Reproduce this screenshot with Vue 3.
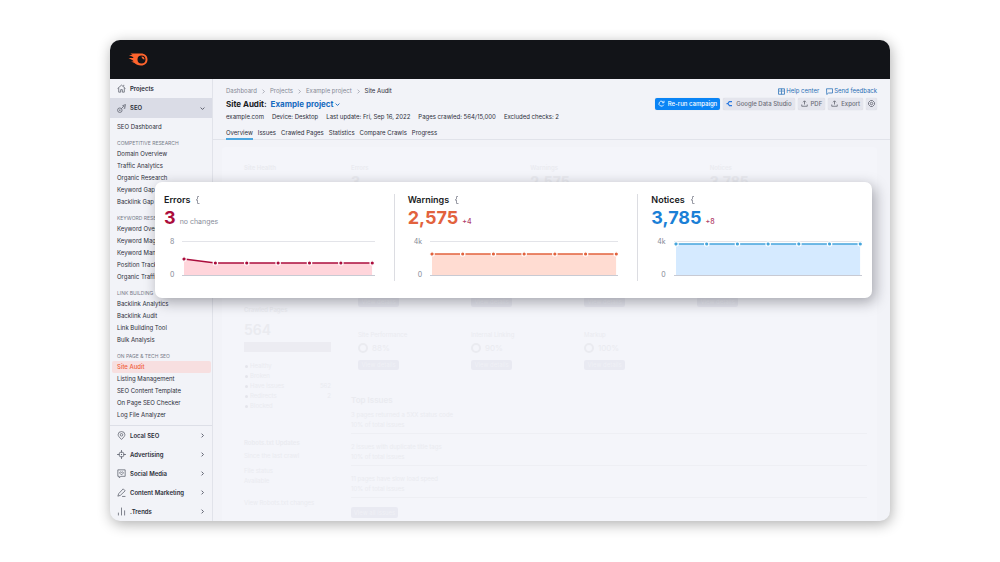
<script setup>
const groups = [
  {
    title: 'Competitive research',
    items: ['Domain Overview', 'Traffic Analytics', 'Organic Research', 'Keyword Gap', 'Backlink Gap']
  },
  {
    title: 'Keyword research',
    items: ['Keyword Overview', 'Keyword Magic Tool', 'Keyword Manager', 'Position Tracking', 'Organic Traffic Insights']
  },
  {
    title: 'Link building',
    items: ['Backlink Analytics', 'Backlink Audit', 'Link Building Tool', 'Bulk Analysis']
  },
  {
    title: 'On page & tech SEO',
    items: ['Site Audit', 'Listing Management', 'SEO Content Template', 'On Page SEO Checker', 'Log File Analyzer']
  }
]

const sections = [
  { name: 'Local SEO', icon: 'M8 15C4 11 2 9 2 6.500A6 5.500 0 0 1 14 6.500C14 9 12 11 8 15ZM8 4.500A2.200 2.200 0 1 0 8 9A2.200 2.200 0 1 0 8 4.500Z' },
  { name: 'Advertising', icon: 'M8 3.500A4.500 4.500 0 1 0 8 12.500A4.500 4.500 0 1 0 8 3.500ZM8 0V5M8 11V16M0 8H5M11 8H16M8 7V9M7 8H9' },
  { name: 'Social Media', icon: 'M1.500 1.500H14.500V13H7L4 15.500V13H1.500ZM8 10.500L5 7.500C4 5.500 7 4 8 6C9 4 12 5.500 11 7.500Z' },
  { name: 'Content Marketing', icon: 'M1.500 14.500L3 10L11 1.500L14.500 5L6 13ZM9 15H15' },
  { name: '.Trends', icon: 'M2.500 10V15M8 1V15M13.500 6V15' }
]

const tabs = ['Overview', 'Issues', 'Crawled Pages', 'Statistics', 'Compare Crawls', 'Progress']
const meta = ['example.com', 'Device: Desktop', 'Last update: Fri, Sep 16, 2022', 'Pages crawled: 564/15,000', 'Excluded checks: 2']

const stats = [
  { name: 'Errors', value: '3', change: 'no changes', max: '8', color: '#ab0d3c', fill: '#ffd5db', points: [17, 21, 21, 21, 21, 21, 21] },
  { name: 'Warnings', value: '2,575', change: '+4', max: '4k', color: '#e2623d', fill: '#ffdcd2', points: [12, 12, 12, 12, 12, 12, 12] },
  { name: 'Notices', value: '3,785', change: '+8', max: '4k', color: '#1b7fd6', line: '#45a5dc', fill: '#d5eaff', points: [2, 2, 2, 2, 2, 2, 2] }
]

const reports = [
  { name: 'Crawlability', score: '91%' },
  { name: 'HTTPS', score: '98%' },
  { name: 'International SEO', score: '100%' },
  { name: 'Core Web Vitals', score: '60%' },
  { name: 'Site Performance', score: '88%' },
  { name: 'Internal Linking', score: '90%' },
  { name: 'Markup', score: '100%' }
]

const legend = [['Healthy', ''], ['Broken', ''], ['Have issues', '562'], ['Redirects', '2'], ['Blocked', '']]

const issues = [
  '3 pages returned a 5XX status code',
  '2 issues with duplicate title tags',
  '11 pages have slow load speed'
]

const x = i => (i * 100) / 6

function area(points) {
  return '0,33 ' + points.map((p, i) => x(i) + ',' + p).join(' ') + ' 100,33'
}
</script>

<template>
  <div class="page">
    <div class="window">
      <header class="topbar">
        <svg class="logo" viewBox="0 0 40 26">
          <path fill="#ff642d" d="M5 1H26C34 1 39 6 39 13C39 20 34 25 26 25C20 25 16 23 13 20L6 17H11L10 15L1 10H11L10 8L2 4H9Z" />
          <circle cx="27" cy="13" r="8" fill="#121418" />
          <path fill="#ff642d" d="M27 7A6 6 0 0 1 33 13C30 13 27 10 27 7Z" />
        </svg>
      </header>

      <div class="body">
        <nav class="sidebar">
          <a href="#" class="section">
            <svg class="icon" viewBox="0 0 16 16"><path d="M1 8L8 2L15 8M3 7V14.500H6.500V10H9.500V14.500H13V7M12 4V1.500" /></svg>
            <span>Projects</span>
          </a>
          <button type="button" class="section open">
            <svg class="icon" viewBox="0 0 16 16"><path d="M5 7A4 4 0 1 0 5 15A4 4 0 1 0 5 7ZM5 10V12M4 11H6M8 8L11 5M10 3L15 1L14 6ZM12 8L15 7" /></svg>
            <span>SEO</span>
            <svg class="arrow" viewBox="0 0 8 8"><path d="M1 2.500L4 5.500L7 2.500" /></svg>
          </button>

          <div class="links">
            <a href="#" class="link">SEO Dashboard</a>
            <div v-for="group in groups" :key="group.title" class="group">
              <h4>{{ group.title }}</h4>
              <a
                v-for="item in group.items"
                :key="item"
                href="#"
                class="link"
                :class="{ active: item === 'Site Audit' }"
              >{{ item }}</a>
            </div>
          </div>

          <div class="more">
            <button v-for="s in sections" :key="s.name" type="button" class="section">
              <svg class="icon" viewBox="0 0 16 16"><path :d="s.icon" /></svg>
              <span>{{ s.name }}</span>
              <svg class="arrow" viewBox="0 0 8 8"><path d="M2.500 1L5.500 4L2.500 7" /></svg>
            </button>
          </div>
        </nav>

        <main class="main">
          <div class="head">
            <div class="row crumbs-row">
              <div class="crumbs">
                <template v-for="c in ['Dashboard', 'Projects', 'Example project']" :key="c">
                  <a href="#">{{ c }}</a>
                  <svg viewBox="0 0 8 8"><path d="M2.500 1L5.500 4L2.500 7" /></svg>
                </template>
                <span>Site Audit</span>
              </div>
              <div class="help">
                <a href="#">
                  <svg viewBox="0 0 14 14"><path d="M1 1.500H13V12.500H1ZM7 1.500V12.500M9 4.500H11M9 7H11M3 4.500H5M3 7H5" /></svg>
                  Help center
                </a>
                <a href="#">
                  <svg viewBox="0 0 14 14"><path d="M1 1.500H13V10H5L1.500 13Z" /></svg>
                  Send feedback
                </a>
              </div>
            </div>

            <div class="row title-row">
              <h1>
                Site Audit:
                <a href="#">Example project <svg viewBox="0 0 8 8"><path d="M1 2.500L4 5.500L7 2.500" /></svg></a>
              </h1>
              <div class="actions">
                <button type="button" class="btn primary">
                  <svg viewBox="0 0 14 14"><path d="M11.500 9.500A5 5 0 1 1 9.500 3M8 5.500H12V1.500" /></svg>
                  Re-run campaign
                </button>
                <button type="button" class="btn">
                  <svg class="studio" viewBox="0 0 14 14"><path d="M6 3H12M6 11H12M1 7H5M6.500 3L4 7L6.500 11" /></svg>
                  Google Data Studio
                </button>
                <button v-for="b in ['PDF', 'Export']" :key="b" type="button" class="btn">
                  <svg viewBox="0 0 14 14"><path d="M7 9V2M4 4.500L7 1.500L10 4.500M1.500 9V12.500H12.500V9" /></svg>
                  {{ b }}
                </button>
                <button type="button" class="btn gear" aria-label="Settings">
                  <svg viewBox="0 0 14 14"><path d="M5 1H9L13 5V9L9 13H5L1 9V5ZM7 4.500A2.500 2.500 0 1 0 7 9.500A2.500 2.500 0 1 0 7 4.500Z" /></svg>
                </button>
              </div>
            </div>

            <div class="meta">
              <span v-for="m in meta" :key="m">{{ m }}</span>
            </div>

            <div class="tabs">
              <a v-for="(t, i) in tabs" :key="t" href="#" :class="{ current: i === 0 }">{{ t }}</a>
            </div>
          </div>

          <div class="panel">
            <div class="left">
              <div class="health"><b>Site Health</b></div>
              <b class="crawled">Crawled Pages</b>
              <div class="total">564</div>
              <div class="bar"></div>
              <ul class="legend">
                <li v-for="l in legend" :key="l[0]"><i></i>{{ l[0] }}<span>{{ l[1] }}</span></li>
              </ul>
              <div class="robots">
                <b>Robots.txt Updates</b>
                <p>Since the last crawl</p>
                <p class="spaced">File status</p>
                <p>Available</p>
                <p class="spaced far">View Robots.txt changes</p>
              </div>
            </div>
            <div class="right">
              <div class="summary">
                <div v-for="s in stats" :key="s.name">
                  <b>{{ s.name }}</b>
                  <strong>{{ s.value }}</strong>
                </div>
              </div>
              <div class="reports">
                <div v-for="r in reports" :key="r.name">
                  <span>{{ r.name }}</span>
                  <div class="score"><i></i>{{ r.score }}</div>
                  <button type="button" class="ghost">View details</button>
                </div>
              </div>
              <h2>Top Issues</h2>
              <div v-for="issue in issues" :key="issue" class="issue">
                <div>{{ issue }}</div>
                <div>10% of total issues</div>
              </div>
              <button type="button" class="ghost wide">View all issues</button>
            </div>
          </div>
        </main>
      </div>

      <section class="popup">
        <template v-for="(s, n) in stats" :key="s.name">
          <div v-if="n" class="divider"></div>
          <div class="stat">
            <h3>
              {{ s.name }}
              <svg viewBox="0 0 5 8"><path d="M4 0.500H2.500V3L1 4H2.500V7.500H4.500" /></svg>
            </h3>
            <div class="figure">
              <strong :style="{ color: s.color }">{{ s.value }}</strong>
              <span :class="{ up: n }">{{ s.change }}</span>
            </div>
            <div class="chart">
              <div class="axis"><span>{{ s.max }}</span><span>0</span></div>
              <div class="plot">
                <svg class="drawing">
                  <svg width="100%" height="33" viewBox="0 0 100 33" preserveAspectRatio="none">
                    <polygon :points="area(s.points)" :fill="s.fill" />
                  </svg>
                  <line
                    v-for="i in 6"
                    :key="'l' + i"
                    :x1="x(i - 1) + '%'"
                    :y1="s.points[i - 1]"
                    :x2="x(i) + '%'"
                    :y2="s.points[i]"
                    :stroke="s.line || s.color"
                    stroke-width="1.500"
                  />
                  <circle
                    v-for="(p, i) in s.points"
                    :key="'c' + i"
                    :cx="x(i) + '%'"
                    :cy="p"
                    r="2.200"
                    :fill="s.line || s.color"
                    stroke="#fff"
                    stroke-width="1.200"
                  />
                </svg>
              </div>
            </div>
          </div>
        </template>
      </section>
    </div>
  </div>
</template>

<style>
body {
  margin: 0;
  background: #fff;
}
</style>

<style scoped>
* {
  box-sizing: border-box;
}

.page {
  padding: 40px 11%;
  font-family: Inter, 'Liberation Sans', sans-serif;
  font-size: 6px;
  line-height: 10px;
  color: #2b2e38;
}

h1,
h2,
h3,
h4,
p,
ul {
  margin: 0;
  padding: 0;
}

a {
  color: inherit;
  text-decoration: none;
}

button {
  border: 0;
  padding: 0;
  background: none;
  font: inherit;
  color: inherit;
  cursor: pointer;
}

svg {
  fill: none;
  stroke: currentColor;
  flex-shrink: 0;
}

.window {
  position: relative;
  border-radius: 10px;
  overflow: hidden;
  background: #f2f3f8;
  box-shadow: 1px 3px 14px rgba(0, 0, 0, 0.32);
}

.topbar {
  display: flex;
  align-items: center;
  height: 39px;
  padding-left: 18px;
  background: #121418;
}

.logo {
  width: 20px;
  height: 13px;
  stroke: none;
}

.body {
  display: flex;
}

.sidebar {
  flex: 0 0 103px;
  border-right: 1px solid #e1e3ea;
}

.section {
  display: flex;
  align-items: center;
  width: 100%;
  height: 19px;
  padding: 0 7px;
  font-weight: 600;
  text-align: left;
}

.section span {
  flex: 1;
}

.icon {
  width: 9px;
  height: 9px;
  margin-right: 4px;
  color: #555966;
  stroke-width: 1.3;
}

.arrow {
  width: 5px;
  height: 5px;
  color: #555966;
  stroke-width: 1.5;
}

.open {
  height: 20px;
  background: #dadce6;
}

.links {
  padding: 3px 1px 4px 2px;
}

.link {
  display: block;
  padding-left: 5px;
  line-height: 12px;
  border-radius: 2px;
  white-space: nowrap;
}

.link.active {
  background: #f7dfe0;
  color: #f0603c;
  font-weight: 500;
}

.group {
  padding-top: 5px;
}

.group h4 {
  padding-left: 5px;
  font-size: 5px;
  font-weight: 400;
  line-height: 10px;
  color: #777b88;
  text-transform: uppercase;
  white-space: nowrap;
}

.more {
  border-top: 1px solid #dddfe7;
}

.main {
  flex: 1;
  min-width: 0;
  display: flex;
  flex-direction: column;
}

.head {
  padding: 7px 13px 0;
  border-bottom: 1px solid #e1e3ea;
}

.row,
.crumbs,
.help,
.help a,
.actions,
.meta,
.tabs {
  display: flex;
  align-items: center;
}

.row {
  justify-content: space-between;
}

.crumbs {
  gap: 4px;
  color: #858996;
}

.crumbs svg {
  width: 5px;
  height: 5px;
}

.crumbs span {
  color: #2b2e38;
}

.help {
  gap: 7px;
  color: #276fb5;
}

.help a {
  gap: 1px;
}

.help svg {
  width: 7px;
  height: 7px;
  stroke-width: 1.5;
}

.title-row {
  height: 15px;
}

h1 {
  font-size: 8px;
  font-weight: 700;
  line-height: 12px;
  color: #191b23;
}

h1 a {
  margin-left: 2px;
  color: #176bbf;
}

h1 svg {
  width: 5px;
  height: 5px;
  stroke-width: 1.5;
}

.actions {
  gap: 3px;
}

.btn {
  display: flex;
  align-items: center;
  gap: 3px;
  height: 12px;
  padding: 0 3px;
  border-radius: 2px;
  background: #e4e5ed;
  color: #6c6e79;
  font-weight: 500;
  box-shadow: 0 0 1px #c4c7cf;
}

.btn svg {
  width: 7px;
  height: 7px;
  stroke-width: 1.7;
}

.btn .studio {
  color: #2878e0;
  stroke-width: 2.5;
}

.primary {
  background: #0a84f5;
  color: #fff;
}

.gear {
  padding: 0 2px;
}

.meta {
  gap: 8px;
  margin-top: 1px;
}

.tabs {
  gap: 5px;
  margin-top: 5px;
}

.tabs a {
  height: 13px;
  line-height: 12px;
  border-bottom: 2px solid transparent;
  margin-bottom: -1px;
}

.tabs .current {
  border-color: #4ba6df;
}

/* page content, faded out behind the popup */
.panel {
  flex: 1;
  display: flex;
  gap: 20px;
  margin: 7px 13px 0 9px;
  padding: 16px 10px 0 22px;
  border-radius: 4px 4px 0 0;
  background: #f4f5fa;
  color: #eaebf0;
}

.left {
  width: 87px;
}

.right {
  flex: 1;
  min-width: 0;
}

.health {
  min-height: 142px;
}

.crawled,
.robots b,
.summary b {
  display: block;
  font-weight: 600;
}

.total {
  margin-top: 3px;
  font-size: 14px;
  font-weight: 600;
  line-height: 24px;
}

.bar {
  height: 10px;
  background: #ececf2;
}

.legend {
  margin-top: 9px;
  list-style: none;
}

.legend li {
  display: flex;
  align-items: center;
}

.legend i {
  width: 3px;
  height: 3px;
  margin: 0 2px 0 1px;
  border-radius: 50%;
  background: #e4e5eb;
}

.legend span {
  margin-left: auto;
}

.robots {
  margin-top: 27px;
  white-space: nowrap;
}

.robots b {
  margin-bottom: 3px;
  font-size: 6px;
}

.robots .spaced {
  margin-top: 5px;
}

.robots .far {
  margin-top: 12px;
}

.summary {
  display: grid;
  grid-template-columns: repeat(3, 1fr);
  column-gap: 22px;
  min-height: 104px;
}

.summary strong {
  font-size: 14px;
  line-height: 18px;
}

.reports {
  display: grid;
  grid-template-columns: repeat(4, 1fr);
  row-gap: 23px;
  padding: 0 57px 0 7px;
}

.reports span {
  display: block;
}

.score {
  display: flex;
  align-items: center;
  gap: 4px;
  font-size: 8px;
  line-height: 16px;
}

.score i {
  width: 10px;
  height: 10px;
  border: 2px solid #eaebf0;
  border-radius: 50%;
}

.ghost {
  display: block;
  width: 41px;
  height: 10px;
  margin-top: 4px;
  border-radius: 2px;
  background: #e9eaf2;
  color: #f0f1f6;
}

.ghost.wide {
  width: 47px;
  height: 11px;
  margin-top: 9px;
}

h2 {
  margin-top: 25px;
  font-size: 8px;
  font-weight: 600;
  line-height: 10px;
}

.issue {
  padding: 8px 0 3px;
  border-bottom: 1px solid #eeeff4;
}

h2 + .issue {
  padding-top: 5px;
}

.popup {
  position: absolute;
  top: 142px;
  left: 45px;
  right: 18px;
  display: flex;
  padding: 12px 8px 22px 9px;
  border-radius: 7px;
  background: #fff;
  box-shadow: 3px 4px 14px rgba(20, 20, 30, 0.36);
}

.divider {
  width: 1px;
  margin: 0 13px -5px 17px;
  background: #dcdde2;
}

.stat {
  flex: 1;
  min-width: 0;
}

h3 {
  display: flex;
  align-items: center;
  gap: 5px;
  font-size: 9px;
  font-weight: 600;
  line-height: 12px;
  color: #191b23;
}

h3 svg {
  width: 5px;
  height: 8px;
  color: #9a9ca6;
}

.figure {
  display: flex;
  align-items: baseline;
  gap: 4px;
  margin-top: 1px;
  line-height: 22px;
}

.figure strong {
  font-size: 18px;
  font-weight: 700;
}

.figure span {
  font-size: 7px;
  color: #898d9a;
}

.figure .up {
  font-weight: 500;
  color: #b0406a;
}

.chart {
  display: flex;
  gap: 8px;
  margin-top: 8px;
}

.axis {
  display: flex;
  flex-direction: column;
  justify-content: space-between;
  align-items: flex-end;
  margin: -4px 0;
  padding-left: 6px;
  font-size: 7px;
  color: #858996;
}

.plot {
  flex: 1;
  margin-right: 2px;
  padding: 0 2px;
  border-top: 1px solid #e3e4e9;
  border-bottom: 1px solid #c8cad3;
}

.drawing {
  display: block;
  width: 100%;
  height: 33px;
  overflow: visible;
}

.drawing polygon {
  stroke: none;
}
</style>
